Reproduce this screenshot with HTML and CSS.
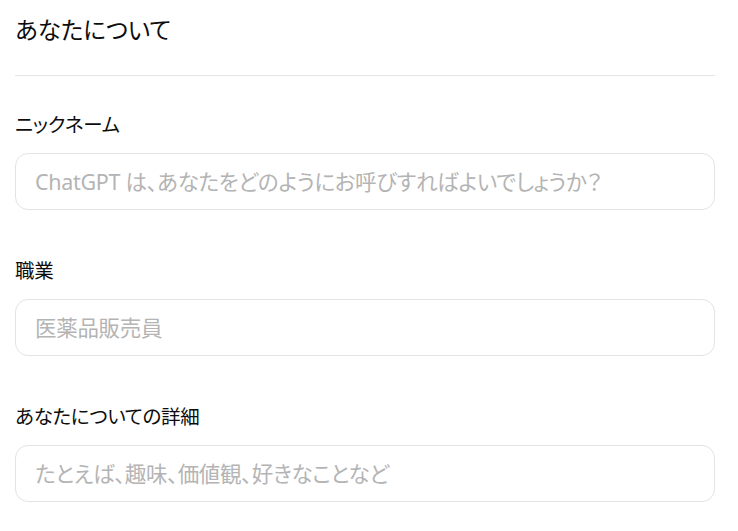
FILE: index.html
```html
<!DOCTYPE html>
<html lang="ja">
<head>
<meta charset="utf-8">
<title>あなたについて</title>
<link rel="stylesheet" href="styles.css">
</head>
<body>
<main class="page">
  <h1 class="title">あなたについて</h1>
  <hr class="divider">
  <div class="field">
    <label class="label" for="nick">ニックネーム</label>
    <input class="input" id="nick" type="text" placeholder="ChatGPT は、あなたをどのようにお呼びすればよいでしょうか？">
  </div>
  <div class="field">
    <label class="label" for="job">職業</label>
    <input class="input" id="job" type="text" placeholder="医薬品販売員">
  </div>
  <div class="field">
    <label class="label" for="about">あなたについての詳細</label>
    <input class="input" id="about" type="text" placeholder="たとえば、趣味、価値観、好きなことなど">
  </div>
</main>
</body>
</html>
```

FILE: styles.css
```css
html, body {
  margin: 0;
  padding: 0;
  background: #ffffff;
}

body {
  font-family: "Noto Sans", "Noto Sans CJK JP", sans-serif;
  color: #0d0d0d;
}

.page {
  width: 700px;
  padding: 0 15px;
  display: flex;
  flex-direction: column;
}

.title {
  margin: 15px 0 0;
  font-size: 23.5px;
  line-height: 30px;
  font-weight: 400;
  font-feature-settings: "palt";
}

.divider {
  margin: 30px 0 0;
  border: 0;
  height: 1px;
  background: #e5e5e5;
}

.field {
  display: flex;
  flex-direction: column;
  gap: 16px;
  margin-top: 37px;
}

.field + .field {
  margin-top: 49px;
}

.label {
  font-size: 19.5px;
  line-height: 24px;
  letter-spacing: -0.3px;
  font-feature-settings: "palt";
}

.input {
  box-sizing: border-box;
  width: 100%;
  height: 57px;
  margin: 0;
  padding: 0 19px;
  border: 1px solid #e3e3e3;
  border-radius: 13px;
  font-family: "Noto Sans", "Noto Sans CJK JP", sans-serif;
  font-size: 21.5px;
  letter-spacing: -0.3px;
  font-feature-settings: "palt";
  color: #0d0d0d;
  background: #ffffff;
  outline: none;
}

.input::placeholder {
  color: #b4b4b4;
  opacity: 1;
}
```
